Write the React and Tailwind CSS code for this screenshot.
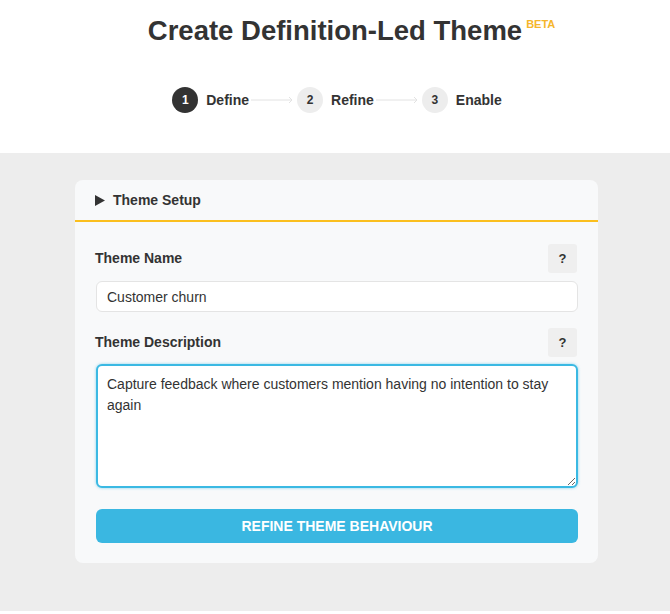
import React, { useEffect, useRef, useState } from 'react';

const Step = ({ n, label, active }) => (
  <div className="flex items-center gap-2">
    <div
      className={`w-[26px] h-[26px] rounded-full flex items-center justify-center text-[12px] font-bold ${
        active ? 'bg-[#333333] text-white' : 'bg-[#ededed] text-[#333333]'
      }`}
    >
      {n}
    </div>
    <span className="text-[14px] font-bold text-[#333333]">{label}</span>
  </div>
);

const Arrow = () => (
  <svg width="44" height="8" viewBox="0 0 44 8" className="mx-[2px]">
    <line x1="0" y1="4" x2="41" y2="4" stroke="#e2e2e2" strokeWidth="1" />
    <path d="M38 1l3 3-3 3" fill="none" stroke="#e2e2e2" strokeWidth="1" />
  </svg>
);

const HelpButton = () => (
  <button className="w-[29px] h-[29px] rounded-[3px] bg-[#efefef] text-[#333333] text-[13px] font-bold flex items-center justify-center">
    ?
  </button>
);

export default function App() {
  const [name, setName] = useState('Customer churn');
  const [description, setDescription] = useState(
    'Capture feedback where customers mention having no intention to stay again'
  );
  const descRef = useRef(null);

  useEffect(() => {
    // caret sits at the end of the description, as when the user just typed it
    const el = descRef.current;
    if (el) {
      el.focus();
      el.setSelectionRange(el.value.length, el.value.length);
    }
  }, []);

  return (
    <div className="min-h-[614px] bg-white font-['Liberation_Sans',Arial,sans-serif] text-[#333333]">
      {/* Header */}
      <div className="h-[153px] flex flex-col items-center pt-[14px]">
        <div className="relative">
          <h1 className="text-[27.5px] leading-[34px] font-bold text-[#333333]">Create Definition-Led Theme</h1>
          <span className="absolute left-full top-[2px] ml-[4px] text-[11px] font-bold text-[#f5b52b]">BETA</span>
        </div>
        <div className="flex items-center mt-[39px] ml-[4px]">
          <Step n="1" label="Define" active />
          <Arrow />
          <Step n="2" label="Refine" />
          <Arrow />
          <Step n="3" label="Enable" />
        </div>
      </div>

      {/* Body */}
      <div className="bg-[#ededed] h-[458px] pt-[27px]">
        <div className="ml-[75px] w-[523px] bg-[#f8f9fa] rounded-[8px]">
          <div className="h-[42px] flex items-center gap-[8px] px-[20px] border-b-[2px] border-[#fbbf1e]">
            <svg width="10" height="11" viewBox="0 0 10 11">
              <path d="M0 0L10 5.5L0 11Z" fill="#333333" />
            </svg>
            <span className="text-[14px] font-bold">Theme Setup</span>
          </div>

          <div className="px-[20px] pt-[22px] pb-[20px]">
            <div className="flex items-center justify-between pr-[1px]">
              <label className="text-[14px] font-bold">Theme Name</label>
              <HelpButton />
            </div>
            <input
              value={name}
              onChange={(e) => setName(e.target.value)}
              className="mt-[8px] w-[482px] ml-[1px] h-[31px] bg-white border border-[#e4e4e4] rounded-[6px] px-[10px] text-[14px] text-[#333333] outline-none"
            />

            <div className="flex items-center justify-between pr-[1px] mt-[16px]">
              <label className="text-[14px] font-bold">Theme Description</label>
              <HelpButton />
            </div>
            <textarea
              ref={descRef}
              value={description}
              onChange={(e) => setDescription(e.target.value)}
              className="mt-[7px] block w-[482px] ml-[1px] h-[124px] bg-white border-2 border-[#3bb9e3] rounded-[6px] px-[9px] py-[8px] text-[14px] leading-[21px] text-[#333333] outline-none shadow-[0_0_3px_rgba(59,185,227,0.6)]"
            />

            <button className="mt-[21px] w-[482px] ml-[1px] h-[34px] rounded-[6px] bg-[#3ab7e1] text-white text-[14px] font-bold uppercase">
              Refine Theme Behaviour
            </button>
          </div>
        </div>
      </div>
    </div>
  );
}
